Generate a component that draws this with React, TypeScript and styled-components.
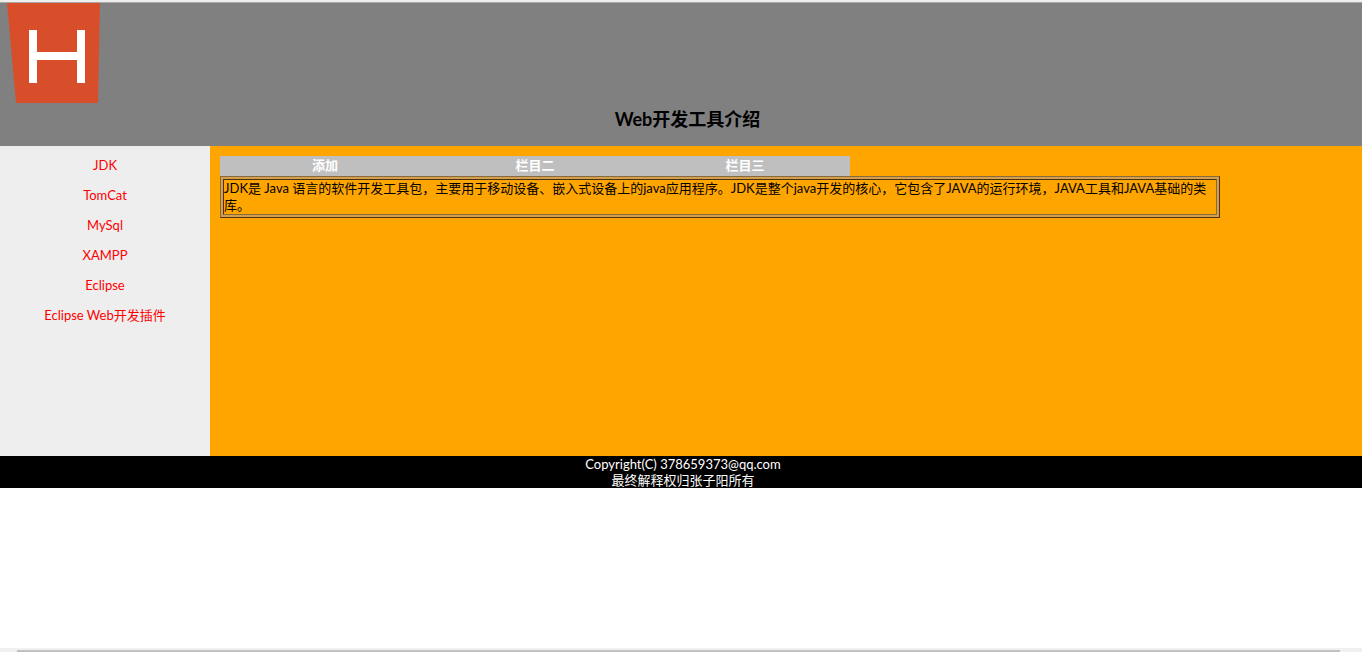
import React from "react";
import styled, { createGlobalStyle } from "styled-components";

const GlobalStyle = createGlobalStyle`
  * {
    box-sizing: border-box;
  }
  body {
    margin: 0;
    background: #fff;
    color: #000;
    font-family: "Trebuchet MS", Lato, "Noto Sans CJK SC", sans-serif;
    font-size: 13px;
    line-height: 17px;
  }
`;

const Page = styled.div`
  display: flex;
  flex-direction: column;
  min-height: 100vh;
`;

const Header = styled.header`
  display: flex;
  flex-direction: column;
  height: 146px;
  background: #808080;
  border-top: 2px solid #eee;
  box-shadow: inset 0 1px 0 #a8a8a8;
`;

const Logo = styled.svg`
  display: block;
  flex: none;
  width: 100px;
  height: 101px;
`;

const Title = styled.h1`
  margin: 4px 0 0;
  padding-left: 13px;
  font-size: 18px;
  line-height: 24px;
  text-align: center;
`;

const Body = styled.div`
  display: flex;
  min-height: 310px;
`;

const Sidebar = styled.nav`
  flex: none;
  width: 210px;
  padding-top: 4px;
  background: #eee;
`;

const NavLink = styled.a`
  display: block;
  color: #f00;
  line-height: 30px;
  text-align: center;
  text-decoration: none;
`;

const Main = styled.main`
  flex: 1;
  min-width: 0;
  padding: 10px;
  background: #ffa500;
`;

const Tabs = styled.div`
  display: grid;
  grid-template-columns: repeat(3, 1fr);
  max-width: 630px;
  background: #bfbfbf;
`;

const Tab = styled.button`
  height: 20px;
  padding: 0 0 2px;
  border: 0;
  background: transparent;
  color: #fff;
  font: inherit;
  font-weight: bold;
  cursor: pointer;
`;

const InfoTable = styled.table`
  width: 100%;
  max-width: 1000px;
  border: 1px solid;
  border-color: #8a6a3c #4c3010 #4c3010 #8a6a3c;
  border-spacing: 2px;
  background: #d2a04c;
`;

const InfoCell = styled.td`
  padding: 0;
  border: 1px solid;
  border-color: #4c3010 #8a6a3c #8a6a3c #4c3010;
  background: #ffa500;
`;

const Footer = styled.footer`
  padding-left: 4px;
  background: #000;
  color: #fff;
  line-height: 16px;
  text-align: center;
`;

const FooterLine = styled.p`
  margin: 0;
`;

const ScrollTrack = styled.div`
  height: 4px;
  margin-top: auto;
  padding: 2px 22px 0 17px;
  background: #f0f0f0;
`;

const ScrollThumb = styled.div`
  height: 2px;
  background: #c1c1c1;
`;

const tools = ["JDK", "TomCat", "MySql", "XAMPP", "Eclipse", "Eclipse Web开发插件"];
const columns = ["添加", "栏目二", "栏目三"];

export default function App() {
  return (
    <Page>
      <GlobalStyle />
      <Header>
        <Logo viewBox="0 0 100 101" role="img" aria-label="HTML">
          <path d="M7 1H100L98 101H16Z" fill="#d94e2a" />
          <path d="M29 28h8v22h40V28h8v53h-8V58H37v23h-8Z" fill="#fff" />
        </Logo>
        <Title>Web开发工具介绍</Title>
      </Header>
      <Body>
        <Sidebar>
          {tools.map((tool) => (
            <NavLink key={tool} href="#">
              {tool}
            </NavLink>
          ))}
        </Sidebar>
        <Main>
          <Tabs>
            {columns.map((column) => (
              <Tab key={column} type="button">
                {column}
              </Tab>
            ))}
          </Tabs>
          <InfoTable>
            <tbody>
              <tr>
                <InfoCell>
                  JDK是 Java 语言的软件开发工具包，主要用于移动设备、嵌入式设备上的java应用程序。JDK是整个java开发的核心，它包含了JAVA的运行环境，JAVA工具和JAVA基础的类库。
                </InfoCell>
              </tr>
            </tbody>
          </InfoTable>
        </Main>
      </Body>
      <Footer>
        <FooterLine>Copyright(C) 378659373@qq.com</FooterLine>
        <FooterLine>最终解释权归张子阳所有</FooterLine>
      </Footer>
      <ScrollTrack>
        <ScrollThumb />
      </ScrollTrack>
    </Page>
  );
}
